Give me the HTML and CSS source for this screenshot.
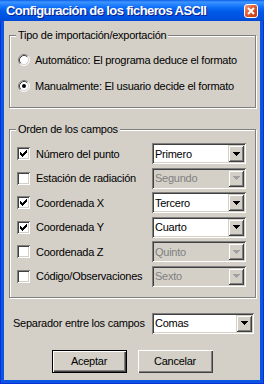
FILE: index.html
```html
<!DOCTYPE html>
<html lang="es">
<head>
  <meta charset="UTF-8" />
  <title>Configuración de los ficheros ASCII</title>
  <link rel="stylesheet" href="styles.css">
</head>
<body>

<div class="window">

  <div class="titlebar">
    <span class="title">Configuración de los ficheros ASCII</span>
    <span class="close">
      <svg width="12" height="12" viewBox="0 0 12 12"><path d="M3 3L9 9M9 3L3 9" stroke="#fff" stroke-width="2"/></svg>
    </span>
  </div>

  <div class="client">

    <!-- Tipo de importación -->
    <fieldset class="group group-tipo">
      <legend>Tipo de importación/exportación</legend>
      <label class="radio-row">
        <svg class="radio" width="12" height="12" viewBox="0 0 12 12">
          <circle cx="6" cy="6" r="5" fill="#fff"/>
          <path d="M2.11 9.89A5.5 5.5 0 0 1 9.89 2.11" fill="none" stroke="#808080"/>
          <path d="M9.89 2.11A5.5 5.5 0 0 1 2.11 9.89" fill="none" stroke="#fff"/>
          <path d="M2.82 9.18A4.5 4.5 0 0 1 9.18 2.82" fill="none" stroke="#404040"/>
          <path d="M9.18 2.82A4.5 4.5 0 0 1 2.82 9.18" fill="none" stroke="#d4d0c8"/>
        </svg>
        Automático: El programa deduce el formato
      </label>
      <label class="radio-row">
        <svg class="radio" width="12" height="12" viewBox="0 0 12 12">
          <circle cx="6" cy="6" r="5" fill="#fff"/>
          <path d="M2.11 9.89A5.5 5.5 0 0 1 9.89 2.11" fill="none" stroke="#808080"/>
          <path d="M9.89 2.11A5.5 5.5 0 0 1 2.11 9.89" fill="none" stroke="#fff"/>
          <path d="M2.82 9.18A4.5 4.5 0 0 1 9.18 2.82" fill="none" stroke="#404040"/>
          <path d="M9.18 2.82A4.5 4.5 0 0 1 2.82 9.18" fill="none" stroke="#d4d0c8"/>
          <circle cx="6" cy="6" r="2" fill="#000"/>
        </svg>
        Manualmente: El usuario decide el formato
      </label>
    </fieldset>

    <!-- Orden de los campos -->
    <fieldset class="group group-orden">
      <legend>Orden de los campos</legend>
      <div id="filas"></div>
    </fieldset>

    <div class="sep-row">
      <span>Separador entre los campos</span>
      <div class="combo combo-wide">
        <span class="combo-text">Comas</span>
        <span class="combo-btn"><svg width="7" height="4" viewBox="0 0 7 4"><path d="M0 0h7v1h-1v1h-1v1h-1v1h-1v-1h-1v-1h-1v-1h-1z"/></svg></span>
      </div>
    </div>

    <div class="buttons">
      <button class="btn btn-default">Aceptar</button>
      <button class="btn">Cancelar</button>
    </div>

  </div>
</div>

<script>
  const campos = [
    { nombre: "Número del punto", orden: "Primero", activo: true },
    { nombre: "Estación de radiación", orden: "Segundo", activo: false },
    { nombre: "Coordenada X", orden: "Tercero", activo: true },
    { nombre: "Coordenada Y", orden: "Cuarto", activo: true },
    { nombre: "Coordenada Z", orden: "Quinto", activo: false },
    { nombre: "Código/Observaciones", orden: "Sexto", activo: false }
  ];

  const check = '<rect x="9" y="3" width="1" height="1"/><rect x="8" y="4" width="2" height="1"/>' +
    '<rect x="3" y="5" width="1" height="1"/><rect x="7" y="5" width="3" height="1"/>' +
    '<rect x="3" y="6" width="2" height="1"/><rect x="6" y="6" width="3" height="1"/>' +
    '<rect x="3" y="7" width="5" height="1"/><rect x="4" y="8" width="3" height="1"/>' +
    '<rect x="5" y="9" width="1" height="1"/>';

  function renderCampos() {
    const cont = document.getElementById("filas");
    campos.forEach(c => {
      const div = document.createElement("div");
      div.className = "field-row";
      div.innerHTML = `
        <label class="check-label">
          <svg class="check" width="13" height="13" viewBox="0 0 13 13" shape-rendering="crispEdges">${c.activo ? check : ""}</svg>
          ${c.nombre}
        </label>
        <div class="combo ${c.activo ? "" : "disabled"}">
          <span class="combo-text">${c.orden}</span>
          <span class="combo-btn"><svg width="7" height="4" viewBox="0 0 7 4"><path d="M0 0h7v1h-1v1h-1v1h-1v1h-1v-1h-1v-1h-1v-1h-1z"/></svg></span>
        </div>
      `;
      cont.appendChild(div);
    });
  }

  renderCampos();
</script>

</body>
</html>
```

FILE: styles.css
```css
body {
  margin: 0;
  font-family: "Liberation Sans", Arial, sans-serif;
  font-size: 11px;
  letter-spacing: -0.25px;
  color: #000;
  background: #d4d0c8;
  white-space: nowrap;
}
.window {
  width: 264px;
  height: 384px;
  display: flex;
  flex-direction: column;
  background: #0a55e2;
  box-shadow: inset 1px 0 #0831d9, inset -1px 0 #0831d9, inset 0 -1px #0831d9;
}
.titlebar {
  height: 21px;
  flex: none;
  display: flex;
  align-items: center;
  justify-content: space-between;
  padding: 0 6px 0 6px;
  background: linear-gradient(#0a5fe8 0px, #3d95ff 2px, #2a86ff 4px, #0a6bf8 8px, #0058e6 12px, #0054e3 16px, #0050df 19px, #0046d0 21px);
  color: white;
}
.title {
  font-weight: bold;
  font-size: 13px;
  letter-spacing: -0.6px;
  text-shadow: 1px 1px #0a1e8c;
}
.close {
  width: 12px;
  height: 12px;
  border: 1px solid #fff;
  border-radius: 3px;
  background: linear-gradient(135deg, #f0a080, #dd5a30 45%, #c03a14);
  display: flex;
}
.client {
  flex: 1;
  margin: 0 4px 4px 4px;
  background: #d4d0c8;
  display: flex;
  flex-direction: column;
}
.group {
  margin: 0 4px 0 5px;
  border: 1px solid #808080;
  box-shadow: inset 1px 1px #fff, 1px 1px #fff;
  min-width: 0;
}
.group legend {
  padding: 0 2px;
  line-height: 13px;
  background: #d4d0c8;
}
.group-tipo {
  margin-top: 8px;
  padding: 10px 8px 13px 8px;
  display: flex;
  flex-direction: column;
  gap: 10px;
}
.group-tipo legend {
  margin-left: -2px;
}
.radio-row {
  display: flex;
  align-items: center;
  gap: 5px;
  height: 16px;
}
.group-orden {
  margin-top: 15px;
  padding: 7px 9px 10px 7px;
}
.group-orden legend {
  margin-left: -1px;
}
#filas {
  display: flex;
  flex-direction: column;
  gap: 3.6px;
}
.field-row {
  display: flex;
  align-items: center;
  height: 21px;
}
.check-label {
  flex: 1;
  display: flex;
  align-items: center;
  gap: 6px;
}
.check {
  flex: none;
  background: #fff;
  box-shadow: inset 1px 1px #808080, inset -1px -1px #fff, inset 2px 2px #404040, inset -2px -2px #d4d0c8;
}
.combo {
  width: 94px;
  height: 21px;
  box-sizing: border-box;
  display: flex;
  align-items: center;
  padding: 2px;
  background: #fff;
  box-shadow: inset 1px 1px #808080, inset -1px -1px #fff, inset 2px 2px #404040, inset -2px -2px #d4d0c8;
}
.combo-text {
  flex: 1;
  padding-left: 1px;
}
.combo-btn {
  width: 16px;
  height: 17px;
  display: flex;
  align-items: center;
  justify-content: center;
  background: #d4d0c8;
  box-shadow: inset 1px 1px #d4d0c8, inset -1px -1px #404040, inset 2px 2px #fff, inset -2px -2px #808080;
}
.combo.disabled {
  background: #d4d0c8;
  color: #808080;
}
.combo.disabled .combo-btn svg {
  fill: #a0a0a0;
}
.sep-row {
  display: flex;
  align-items: center;
  justify-content: space-between;
  margin: 15px 6px 0 9px;
}
.combo-wide {
  width: 102px;
}
.buttons {
  display: flex;
  justify-content: center;
  gap: 11px;
  margin-top: 16px;
}
.btn {
  width: 75px;
  height: 23px;
  border: 0;
  padding: 0;
  background: #d4d0c8;
  font: 11px "Liberation Sans", Arial, sans-serif;
  letter-spacing: -0.25px;
  color: #000;
  box-shadow: inset 1px 1px #fff, inset -1px -1px #404040, inset -2px -2px #808080;
}
.btn-default {
  box-shadow: inset 0 0 0 1px #000, inset 2px 2px #fff, inset -2px -2px #404040, inset -3px -3px #808080;
}
```
